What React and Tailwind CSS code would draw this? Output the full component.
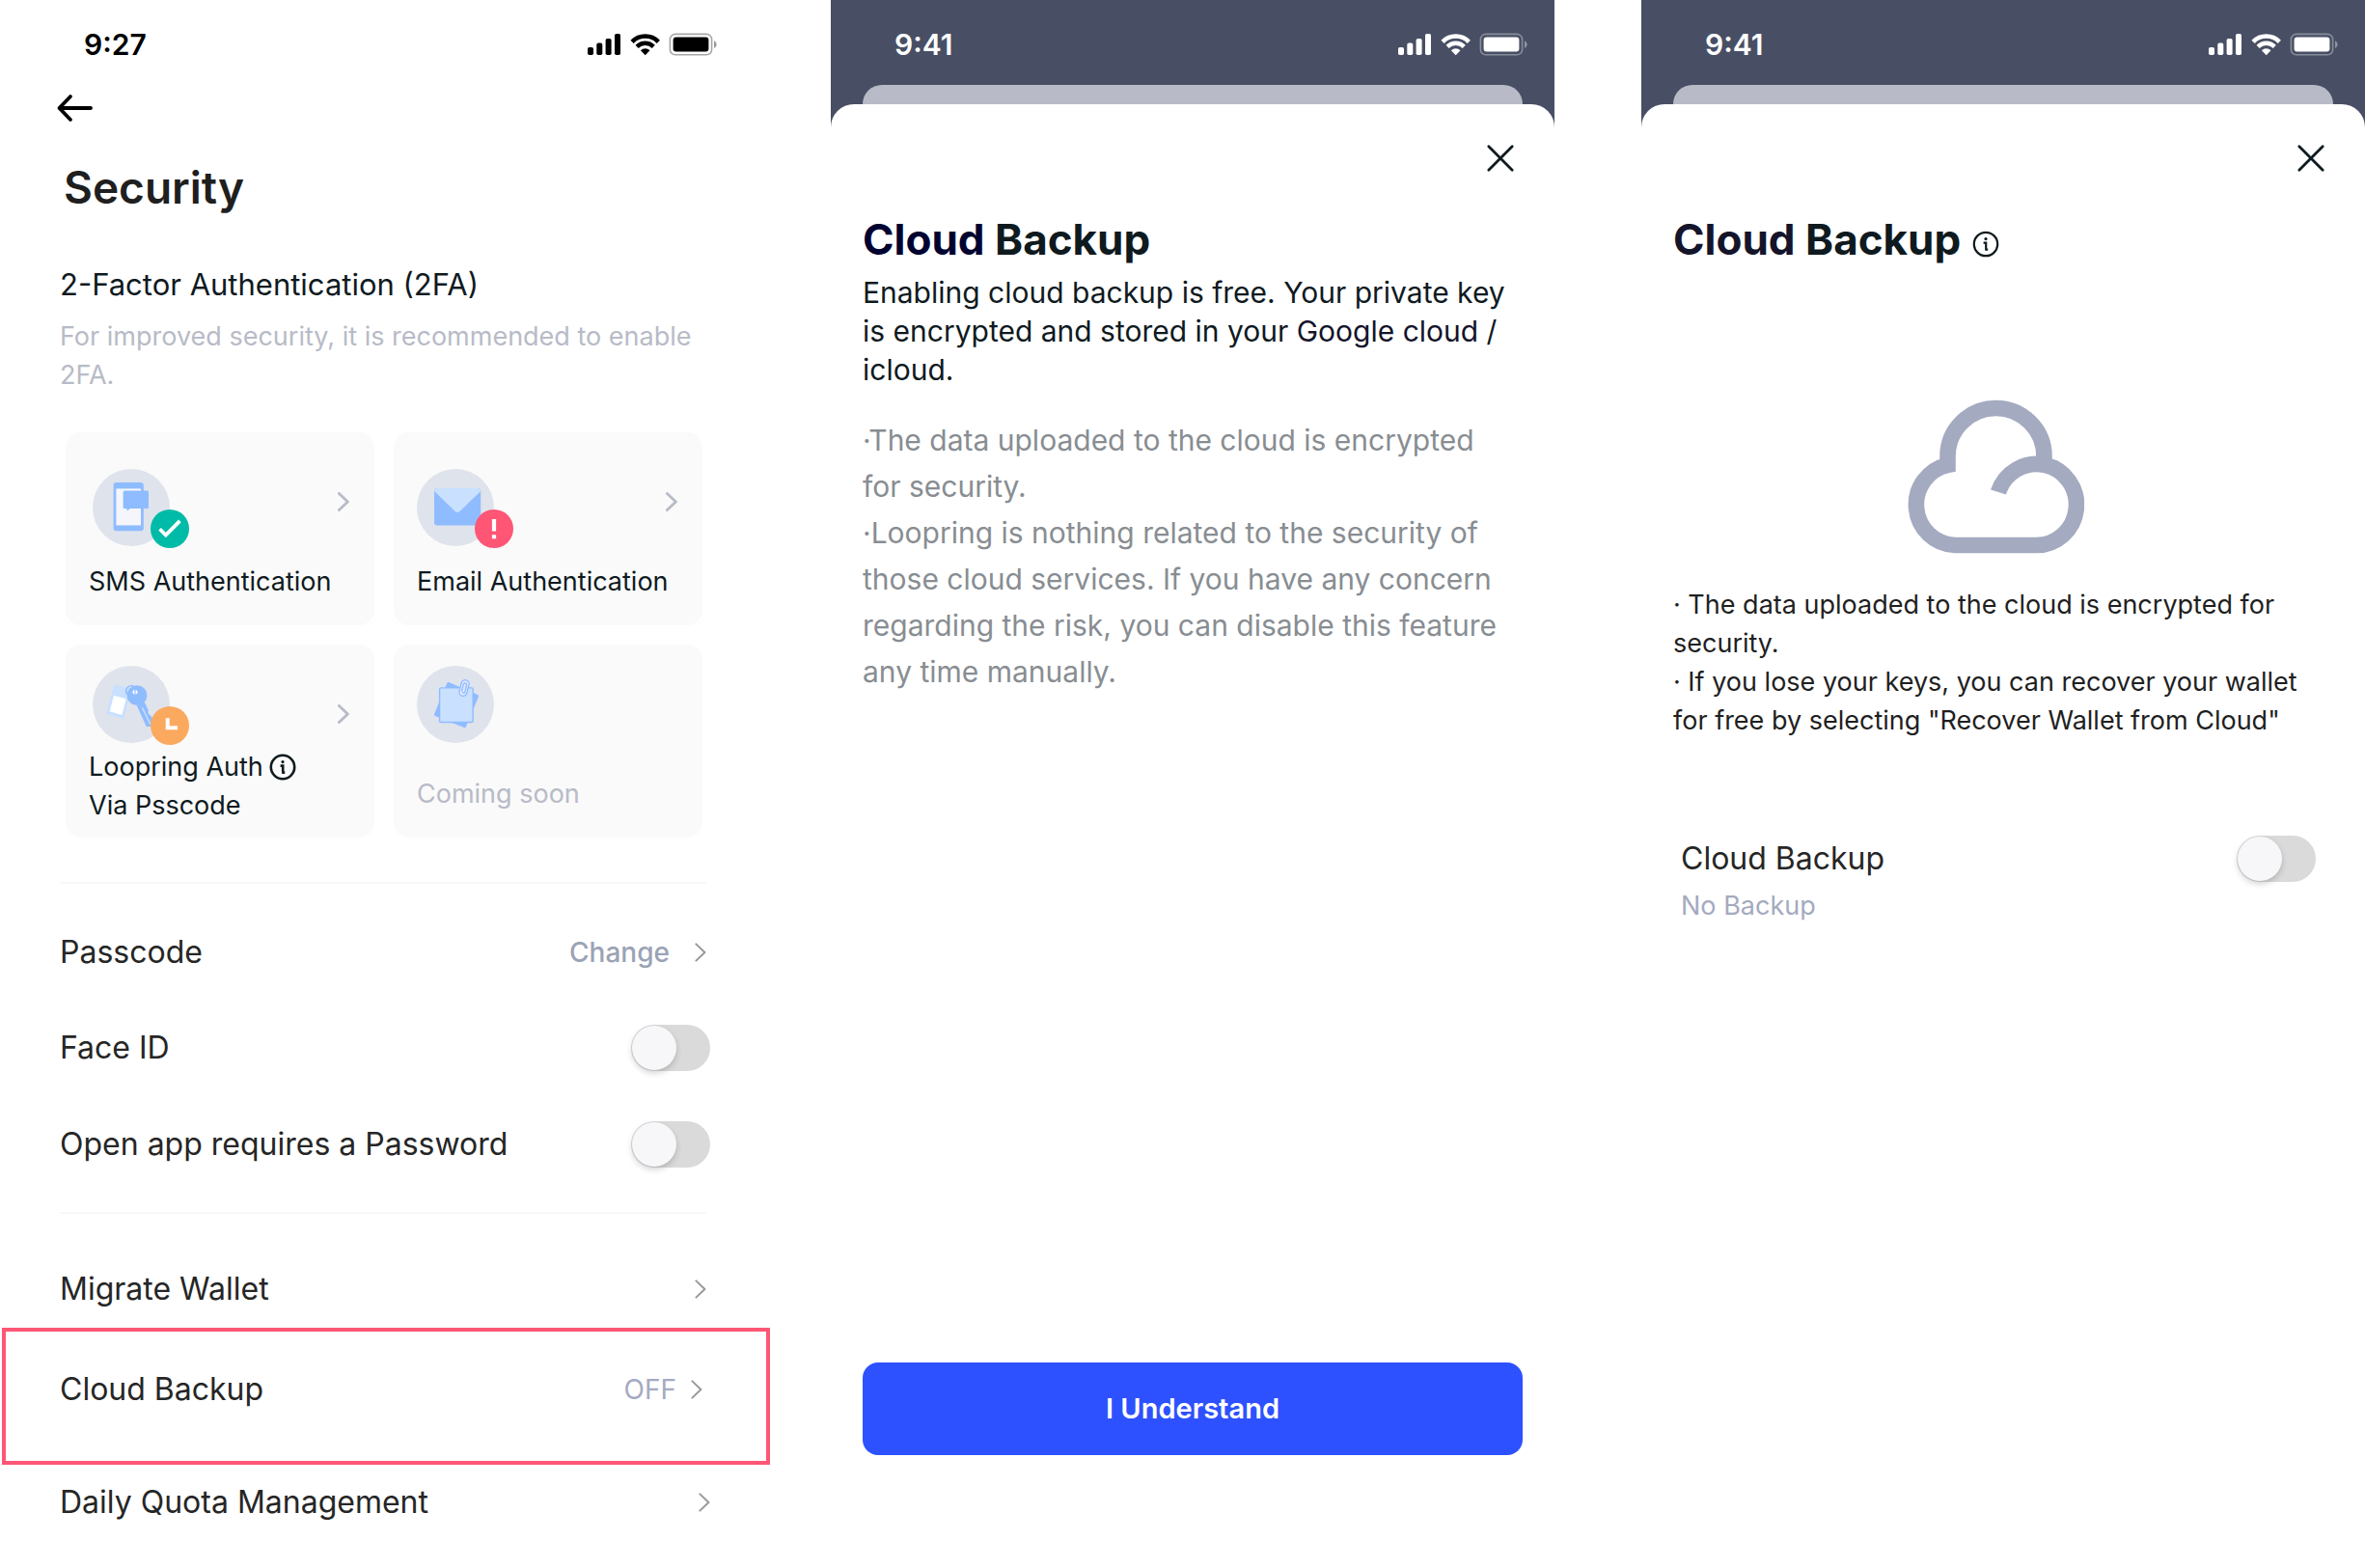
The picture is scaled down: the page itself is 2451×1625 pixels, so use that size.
import { useState } from "react";

function StatusBar({ time, className }) {
  return (
    <div className={`flex h-[88px] items-center justify-between pt-1 pr-[28px] pl-[66px] ${className}`}>
      <span className="text-[30px] leading-10 font-semibold">{time}</span>
      <svg width="134" height="24" viewBox="0 0 134 24" fill="currentColor" aria-hidden="true">
        {/* signal */}
        <rect x="0" y="15" width="6" height="8" rx="1.8" />
        <rect x="9.3" y="10.6" width="6" height="12.4" rx="1.8" />
        <rect x="18.6" y="6" width="6" height="17" rx="1.8" />
        <rect x="28" y="1" width="6" height="22" rx="1.8" />
        {/* wifi */}
        <path d="M46.1 9.3a19 19 0 0 1 27.2 0" fill="none" stroke="currentColor" strokeWidth="4.6" />
        <path d="M51.1 14.4a12.1 12.1 0 0 1 17.2 0" fill="none" stroke="currentColor" strokeWidth="4.4" />
        <path d="M59.7 23.2L54.9 18.3A6.8 6.8 0 0 1 64.5 18.3Z" />
        {/* battery */}
        <rect x="85.4" y="1.4" width="43.2" height="21.4" rx="5.4" fill="none" stroke="currentColor" strokeWidth="1.6" opacity="0.35" />
        <path d="M131 8.2c1.6.7 2.6 2.2 2.6 3.9s-1 3.2-2.6 3.9Z" opacity="0.4" />
        <rect x="88.6" y="4.6" width="36.8" height="15" rx="3" />
      </svg>
    </div>
  );
}

function Chevron({ bold }) {
  return (
    <svg
      className={bold ? "shrink-0 text-[#b8bbc7]" : "shrink-0 text-[#999999]"}
      width="12"
      height="20"
      viewBox="0 0 12 20"
      fill="none"
      stroke="currentColor"
      strokeWidth={bold ? 2.8 : 2}
      strokeLinecap="round"
      strokeLinejoin="round"
      aria-hidden="true"
    >
      <path d="M1.4 1.4L10.4 10L1.4 18.6" />
    </svg>
  );
}

function InfoIcon({ strokeWidth }) {
  return (
    <svg width="28" height="28" viewBox="0 0 28 28" fill="none" stroke="currentColor" strokeWidth={strokeWidth} aria-hidden="true">
      <circle cx="14" cy="14" r="12.2" />
      <circle cx="14" cy="8.6" r="1.6" fill="currentColor" stroke="none" />
      <path d="M11.6 12.6h2.6v7M13.2 19.6h3" />
    </svg>
  );
}

function Toggle({ id }) {
  const [on, setOn] = useState(false);
  return (
    <input
      id={id}
      type="checkbox"
      role="switch"
      checked={on}
      onChange={(e) => setOn(e.target.checked)}
      className="h-12 w-[82px] shrink-0 cursor-pointer appearance-none rounded-full bg-[#dadada] p-px before:block before:size-[46px] before:rounded-full before:bg-[#f7f7fa] before:shadow-[0_3px_6px_rgba(0,0,0,0.18)] checked:bg-[#2e51ff] checked:before:ml-[34px]"
    />
  );
}

function IconBase({ children }) {
  return (
    <svg width="102" height="84" viewBox="0 0 102 84" className="-mb-1 block" aria-hidden="true">
      <circle cx="40" cy="40" r="40" fill="#dfe3ec" />
      {children}
    </svg>
  );
}

const SmsIcon = () => (
  <IconBase>
    <rect x="21.6" y="14" width="31.2" height="50.2" rx="3" fill="#8fbcff" />
    <rect x="24.4" y="20.4" width="25.6" height="38" fill="#f5f6fc" />
    <path d="M33.2 22.6h23.2c.9 0 1.6.7 1.6 1.6v15.2c0 .9-.7 1.6-1.6 1.6H39l-3.2 2.6-.6-2.6h-2c-.9 0-1.6-.7-1.6-1.6V24.2c0-.9.7-1.6 1.6-1.6Z" fill="#8fbcff" />
    <circle cx="80" cy="62" r="20" fill="#00bba7" />
    <path d="M69.6 62.2L75.8 68.6L90.4 53.8" fill="none" stroke="#fff" strokeWidth="3.8" />
  </IconBase>
);

const EmailIcon = () => (
  <IconBase>
    <rect x="18" y="20" width="48.2" height="38.4" rx="3" fill="#8fbcff" />
    <path d="M18 23c0-1.700 1.300-3 3-3h42.200c1.700 0 3 1.300 3 3L45 43.600c-1.700 1.700-4.100 1.700-5.800 0Z" fill="#c9e0ff" />
    <circle cx="80" cy="62" r="20" fill="#ff5676" />
    <path d="M80 52v12.4M80 68.2v4" fill="none" stroke="#fff" strokeWidth="4.2" />
  </IconBase>
);

const KeysIcon = () => (
  <IconBase>
    <path d="M22.3 19.3L40 24L32.3 55L14 50Z" fill="#c9e0ff" />
    <path d="M22 30.7L34.7 34.3L30.3 51L17.7 47.3Z" fill="#fff" />
    <path d="M35.5 29.5c-2-3.2-.8-7.6 3-8.6 1.7-.5 3.2-.2 4.4.6" fill="none" stroke="#8fbcff" strokeWidth="1.5" />
    <circle cx="46" cy="30.7" r="10.4" fill="#8fbcff" />
    <ellipse cx="44" cy="27.2" rx="2.6" ry="2.2" fill="#fff" />
    <path d="M44 25v4.6" stroke="#8fbcff" strokeWidth="1.2" />
    <path d="M45.7 41L54 38L57.6 45.7L57.6 49.5L62.3 54L64 63H55.7Z" fill="#8fbcff" />
    <path d="M51.3 43.4L60 60.8" stroke="#c9e0ff" strokeWidth="1.4" />
    <circle cx="80" cy="62" r="20" fill="#fba95e" />
    <path d="M77.7 54.2V64.2H88" fill="none" stroke="#fff" strokeWidth="4" />
  </IconBase>
);

const NotesIcon = () => (
  <IconBase>
    <path d="M32.6 18.4L62.6 31.4L49.6 62.8L19.4 50.6Z" fill="#8fbcff" stroke="#8fbcff" strokeWidth="2.8" strokeLinejoin="round" />
    <rect x="23.6" y="22.9" width="34.6" height="35.6" rx="1.6" fill="#c9e0ff" stroke="#8fbcff" strokeWidth="1.4" />
    <g fill="none" stroke="#8fbcff" strokeWidth="1.3" transform="rotate(14 49 23)">
      <rect x="45" y="14.6" width="8" height="16.8" rx="4" fill="#dfe9fa" />
      <path d="M47.4 27V19.600a1.700 1.700 0 0 1 3.400 0V27a1.200 1.200 0 0 1-2.400 0" />
    </g>
  </IconBase>
);

function AuthCard({ icon, iconClass, textClass, className, soon, children }) {
  return (
    <button
      type="button"
      disabled={soon}
      className={`relative flex h-[200px] flex-col items-start rounded-2xl bg-[#fafafa] pl-6 text-left text-[27px] leading-10 ${className}`}
    >
      <span className={iconClass}>{icon}</span>
      <span className={textClass}>{children}</span>
      {!soon && (
        <span className="absolute top-[62px] right-[26px]">
          <Chevron bold />
        </span>
      )}
    </button>
  );
}

function LinkRow({ label, value, valueClass = "", className = "h-20" }) {
  return (
    <a href="#" className={`flex items-center text-[32px] leading-10 text-[#262626] ${className}`}>
      <span className="flex-1">{label}</span>
      {value && <span className={`text-[28px] ${valueClass}`}>{value}</span>}
      <Chevron />
    </a>
  );
}

function ToggleRow({ id, label }) {
  return (
    <div className="-mr-1 flex h-[100px] items-center justify-between text-[32px] leading-10 text-[#262626]">
      <label htmlFor={id}>{label}</label>
      <Toggle id={id} />
    </div>
  );
}

function SecurityScreen() {
  return (
    <section className="flex min-w-0 flex-1 flex-col text-[#0f1a1f]">
      <StatusBar time="9:27" className="text-black" />
      <div className="flex h-12 items-center pl-[36px]">
        <button type="button" aria-label="Back" className="text-black">
          <svg width="40" height="32" viewBox="0 0 40 32" fill="none" stroke="currentColor" strokeWidth="3.8" strokeLinecap="round" strokeLinejoin="round">
            <path d="M37 16H4.500M16 4L4.500 16L16 28" />
          </svg>
        </button>
      </div>

      <main className="mr-[39px] ml-[41px] flex flex-col">
        <h1 className="mt-[30px] pl-1 text-[46px] leading-14 font-semibold text-[#1f1f1f]">Security</h1>
        <h2 className="mt-[53px] text-[31px] leading-10">2-Factor Authentication (2FA)</h2>
        <p className="mt-[14px] text-[27px] leading-10 text-[#b8bbc7]">
          For improved security, it is recommended to enable 2FA.
        </p>

        <div className="mt-[39px] mr-1 ml-1.5 grid grid-cols-2 gap-5">
          <AuthCard icon={<SmsIcon />} iconClass="pl-1" textClass="mt-[17px]" className="pt-[38px]">
            SMS Authentication
          </AuthCard>
          <AuthCard icon={<EmailIcon />} textClass="mt-[17px]" className="pt-[38px]">
            Email Authentication
          </AuthCard>
          <AuthCard icon={<KeysIcon />} iconClass="pl-1" textClass="mt-[5px]" className="pt-[22px]">
            <span className="flex items-center gap-1.5">
              Loopring Auth <InfoIcon strokeWidth={2.6} />
            </span>
            Via Psscode
          </AuthCard>
          <AuthCard icon={<NotesIcon />} textClass="mt-[33px] text-[#b8bbc7]" className="pt-[22px]" soon>
            Coming soon
          </AuthCard>
        </div>

        <hr className="mt-[46px] border-t-2 border-[#f7f7f8]" />
        <div className="mt-[22px]">
          <LinkRow label="Passcode" value="Change" valueClass="mr-[26px] font-medium text-[#9aa3b5]" className="h-[98px]" />
          <ToggleRow id="face-id" label="Face ID" />
          <ToggleRow id="open-password" label="Open app requires a Password" />
        </div>

        <hr className="mt-5 border-t-2 border-[#f7f7f8]" />
        <div className="mt-[38px]">
          <LinkRow label="Migrate Wallet" />
          {/* highlighted entry, wider than the column */}
          <div className="-mr-[66px] -ml-[60px] border-4 border-[#ff5676] pr-[66px] pb-[15px] pl-14">
            <LinkRow label="Cloud Backup" value="OFF" valueClass="mr-[15px] text-[#a4aac3]" className="h-[119px]" />
          </div>
          <LinkRow label="Daily Quota Management" className="-mr-1 h-[78px]" />
        </div>
      </main>
    </section>
  );
}

function Sheet({ children }) {
  return (
    <section className="flex min-w-0 flex-1 flex-col bg-[#484f64]">
      <StatusBar time="9:41" className="text-white" />
      <div className="mx-[33px] h-5 rounded-t-[20px] bg-[#b8bbc7]" />
      <div className="flex flex-1 flex-col rounded-t-3xl bg-white px-[33px] text-[#0f1a1f]">
        <button type="button" aria-label="Close" className="mt-10 mr-[7px] self-end">
          <svg width="32" height="32" viewBox="0 0 32 32" stroke="currentColor" strokeWidth="2.8" strokeLinecap="round">
            <path d="M3.800 3.800L28.200 28.200M28.200 3.800L3.800 28.200" />
          </svg>
        </button>
        {children}
      </div>
    </section>
  );
}

export default function App() {
  return (
    <div className="flex min-h-screen gap-[90px] bg-white pl-[21px] font-['Inter',sans-serif]">
      <SecurityScreen />

      <Sheet>
        <h2 className="mt-[42px] text-[44px] leading-[52px] font-bold">
          <span className="text-[#000330]">Cloud</span> Backup
        </h2>
        <p className="mt-[9px] mr-[14px] text-[30px] leading-10">
          Enabling cloud backup is free. Your private key is encrypted and stored in your{" "}
          <span className="text-[#14142b]">Google cloud</span> / icloud.
        </p>
        <div className="mt-[29px] mr-[14px] text-[30px] leading-12 text-[#888d92]">
          <p>·The data uploaded to the cloud is encrypted for security.</p>
          <p>
            ·Loopring is nothing related to the security of those cloud services. If you have any concern
            regarding the risk, you can disable this feature any time manually.
          </p>
        </div>
        <button type="button" className="mt-auto mb-[117px] h-24 rounded-2xl bg-[#2e51ff] text-[29px] font-semibold text-white">
          I Understand
        </button>
      </Sheet>

      <Sheet>
        <h2 className="mt-[42px] flex items-center gap-3 text-[44px] leading-[52px] font-bold">
          <span>
            <span className="text-[#14142b]">Cloud</span> Backup
          </span>
          <span className="pt-2.5">
            <InfoIcon strokeWidth={2.2} />
          </span>
        </h2>
        <div className="mt-[140px] mr-4 flex flex-col items-center">
          <svg width="184" height="160" viewBox="0 0 184 160" fill="none" stroke="#a4aac0" strokeWidth="16.6" aria-hidden="true">
            <path d="M95 96A41.500 42 0 1 1 134 151H50A41.500 42 0 0 1 42.500 68V59A50 50 0 0 1 142.500 59V68" />
          </svg>
        </div>
        <div className="mt-[33px] mr-[14px] text-[27px] leading-10 text-[#1f1f1f]">
          <p>· The data uploaded to the cloud is encrypted for security.</p>
          <p>· If you lose your keys, you can recover your wallet for free by selecting "Recover Wallet from Cloud"</p>
        </div>
        <div className="mt-[99px] mr-[18px] ml-2 flex items-center justify-between text-[32px] leading-12 text-[#262626]">
          <label htmlFor="cloud-backup">Cloud Backup</label>
          <Toggle id="cloud-backup" />
        </div>
        <p className="mt-[5px] ml-2 text-[27px] leading-10 text-[#a4aac0]">No Backup</p>
      </Sheet>
    </div>
  );
}
